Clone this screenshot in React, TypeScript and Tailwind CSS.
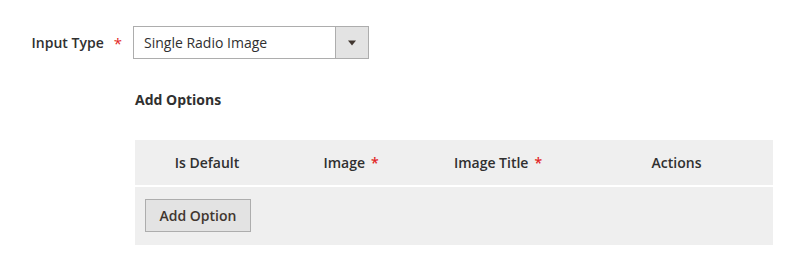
const font = { fontFamily: '"Open Sans", "Liberation Sans", sans-serif' };

function Required() {
  return <span className="text-[#e22626] ml-[6px]">*</span>;
}

export default function App() {
  return (
    <div className="w-[810px] h-[271px] bg-white text-[#303030] text-[14px] leading-[20px]" style={font}>
      <div className="pt-[26px]">
        <div className="flex items-center">
          <label className="w-[122px] flex justify-end items-center font-semibold">
            <span>Input Type</span>
            <span className="text-[#e22626] ml-[10px] text-[15px] font-normal">*</span>
          </label>
          <div className="ml-[11px] flex w-[236px] h-[33px] border border-[#adadad] bg-white">
            <div className="flex-1 flex items-center pl-[10px]">Single Radio Image</div>
            <div className="w-[33px] border-l border-[#adadad] bg-[#e3e3e3] flex items-center justify-center">
              <svg width="10" height="6" viewBox="0 0 10 6">
                <path d="M1 0.5 H9 L5 5.5 Z" fill="#41362f" />
              </svg>
            </div>
          </div>
        </div>

        <div className="ml-[135px] mt-[31px] font-bold text-[14px]">Add Options</div>

        <div className="ml-[135px] mt-[30px] w-[638px] bg-[#efefef]">
          <div className="grid grid-cols-[144px_144px_150px_200px] h-[47px] items-center text-center border-b-2 border-white font-semibold">
            <div>Is Default</div>
            <div>
              Image<Required />
            </div>
            <div>
              Image Title<Required />
            </div>
            <div className="pl-[7px]">Actions</div>
          </div>
          <div className="h-[58px] pt-[12px] pl-[10px]">
            <button className="h-[33px] w-[106px] border border-[#adadad] bg-[#e3e3e3] text-[#41362f] text-[14px] font-semibold" style={font}>
              Add Option
            </button>
          </div>
        </div>
      </div>
    </div>
  );
}
